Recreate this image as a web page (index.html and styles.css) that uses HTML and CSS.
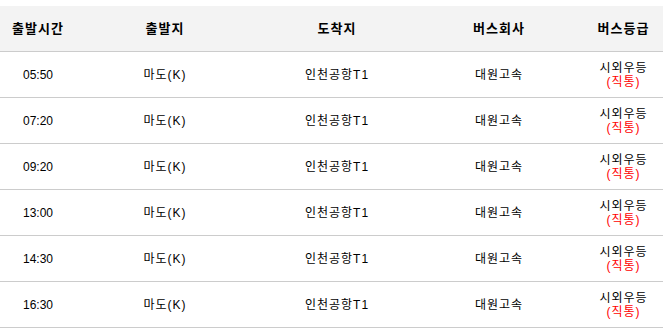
FILE: index.html
```html
<!DOCTYPE html>
<html lang="ko">
<head>
<meta charset="utf-8">
<link rel="stylesheet" href="styles.css">
</head>
<body>
<table class="schedule">
  <colgroup>
    <col class="c-time"><col class="c-from"><col class="c-to"><col class="c-company"><col class="c-grade">
  </colgroup>
  <thead>
    <tr><th>출발시간</th><th>출발지</th><th>도착지</th><th>버스회사</th><th class="grade">버스등급</th></tr>
  </thead>
  <tbody>
    <tr><td class="time">05:50</td><td>마도(K)</td><td>인천공항T1</td><td>대원고속</td><td class="grade">시외우등<br><span class="direct">(직통)</span></td></tr>
    <tr><td class="time">07:20</td><td>마도(K)</td><td>인천공항T1</td><td>대원고속</td><td class="grade">시외우등<br><span class="direct">(직통)</span></td></tr>
    <tr><td class="time">09:20</td><td>마도(K)</td><td>인천공항T1</td><td>대원고속</td><td class="grade">시외우등<br><span class="direct">(직통)</span></td></tr>
    <tr><td class="time">13:00</td><td>마도(K)</td><td>인천공항T1</td><td>대원고속</td><td class="grade">시외우등<br><span class="direct">(직통)</span></td></tr>
    <tr><td class="time">14:30</td><td>마도(K)</td><td>인천공항T1</td><td>대원고속</td><td class="grade">시외우등<br><span class="direct">(직통)</span></td></tr>
    <tr><td class="time">16:30</td><td>마도(K)</td><td>인천공항T1</td><td>대원고속</td><td class="grade">시외우등<br><span class="direct">(직통)</span></td></tr>
  </tbody>
</table>
</body>
</html>
```

FILE: styles.css
```css
html, body {
  margin: 0;
  padding: 0;
  background: #fff;
}
body {
  padding-top: 6px;
  font-family: "Liberation Sans", "Noto Sans CJK KR", sans-serif;
  color: #000;
}
.schedule {
  width: 663px;
  table-layout: fixed;
  border-collapse: collapse;
}
.c-time { width: 76px; }
.c-from { width: 178px; }
.c-to { width: 166px; }
.c-company { width: 158px; }
.c-grade { width: 85px; }
.schedule th {
  height: 45px;
  padding: 0;
  background: #f3f3f3;
  font-size: 13px;
  font-weight: bold;
  letter-spacing: 1px;
  text-align: center;
  border-bottom: 1px solid #cccccc;
  line-height: 15px;
}
.schedule td {
  height: 45px;
  padding: 0;
  font-size: 12px;
  line-height: 14px;
  letter-spacing: 1px;
  text-align: center;
  vertical-align: middle;
  border-bottom: 1px solid #cccccc;
}
.schedule td.time {
  letter-spacing: 0;
}
.schedule .grade {
  padding-left: 6px;
}
.direct {
  color: #ff0000;
}
```
